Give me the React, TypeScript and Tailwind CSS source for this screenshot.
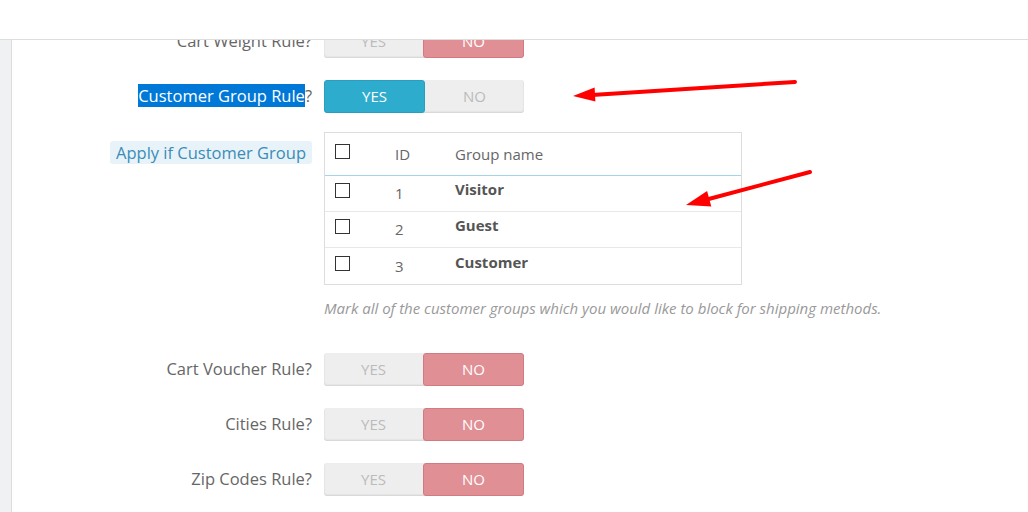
import React from "react";

const font = { fontFamily: '"Open Sans", "Noto Sans", sans-serif' };

type ToggleProps = { on: boolean };

const Toggle = ({ on }: ToggleProps) => {
  return (
    <div className="flex h-[33px] w-[200px] shrink-0 rounded-[3px] bg-[#eeeeee] text-[15px] shadow-[inset_0_-1px_2px_rgba(0,0,0,0.12)]">
      {on ? (
        <span className="flex flex-1 items-center justify-center rounded-[3px] border border-[#299fc0] bg-[#2eacce] text-white">
          YES
        </span>
      ) : (
        <span className="flex flex-1 items-center justify-center text-[#bbbbbb]">YES</span>
      )}
      {on ? (
        <span className="flex flex-1 items-center justify-center text-[#bbbbbb]">NO</span>
      ) : (
        <span className="flex flex-1 items-center justify-center rounded-[3px] border border-[#d27a82] bg-[#e08f95] text-white">
          NO
        </span>
      )}
    </div>
  );
};

const Checkbox = () => (
  <span className="mb-[6px] block h-[15px] w-[15px] border border-[#333333] bg-white"></span>
);

const groups = [
  { id: 1, name: "Visitor" },
  { id: 2, name: "Guest" },
  { id: 3, name: "Customer" },
];

const RuleRow = ({ label, on }: { label: React.ReactNode; on: boolean }) => (
  <div className="flex items-center">
    <div className="w-[312px] shrink-0 pr-3 text-right text-[16.5px] text-[#666666]">{label}</div>
    <Toggle on={on} />
  </div>
);

export default function App() {
  return (
    <div className="relative h-[512px] w-[1028px] overflow-hidden bg-white" style={font}>
      <header className="h-[40px] border-b border-[#dddddd] bg-white"></header>
      <div className="flex h-[472px]">
        <aside className="w-[12px] shrink-0 border-r border-[#dcdcdc] bg-[#eff1f3]"></aside>
        <main className="-ml-[12px] flex-1 overflow-hidden">
          <div className="-mt-[15px] flex flex-col">
            <div className="pl-[12px]">
              <RuleRow label="Cart Weight Rule?" on={false} />
            </div>
            <div className="mt-[22px] pl-[12px]">
              <RuleRow
                on={true}
                label={
                  <>
                    <span className="bg-[#0078d7] text-white">Customer Group Rule</span>?
                  </>
                }
              />
            </div>

            <div className="mt-[19px] flex items-start pl-[12px]">
              <div className="flex w-[312px] shrink-0 justify-end pr-3 pt-[9px]">
                <span className="rounded-[3px] bg-[#e8f3f9] px-[6px] text-[16.5px] leading-[23px] text-[#3a8cb7]">
                  Apply if Customer Group
                </span>
              </div>
              <div className="flex flex-col">
                <div className="w-[418px] border border-[#dddddd] text-[15px] text-[#666666]">
                  <div className="grid h-[43px] grid-cols-[60px_60px_1fr] items-center border-b border-[#a6d3ec] pl-[10px]">
                    <Checkbox />
                    <span>ID</span>
                    <span>Group name</span>
                  </div>
                  {groups.map((g, i) => (
                    <div
                      key={g.id}
                      className={
                        i < groups.length - 1
                          ? "grid h-[36px] grid-cols-[60px_60px_1fr] items-center border-b border-[#e8e8e8] pl-[10px]"
                          : "grid h-[36px] grid-cols-[60px_60px_1fr] items-center pl-[10px]"
                      }
                    >
                      <Checkbox />
                      <span>{g.id}</span>
                      <span className="pb-[8px] font-bold text-[#555555]">{g.name}</span>
                    </div>
                  ))}
                </div>
                <p className="mt-[12px] whitespace-nowrap text-[15px] italic text-[#999999]">
                  Mark all of the customer groups which you would like to block for shipping methods.
                </p>
              </div>
            </div>

            <div className="mt-[33px] pl-[12px]">
              <RuleRow label="Cart Voucher Rule?" on={false} />
            </div>
            <div className="mt-[22px] pl-[12px]">
              <RuleRow label="Cities Rule?" on={false} />
            </div>
            <div className="mt-[22px] pl-[12px]">
              <RuleRow label="Zip Codes Rule?" on={false} />
            </div>
          </div>
        </main>
      </div>

      <svg className="pointer-events-none absolute left-0 top-0" width="1028" height="512">
        <line x1="795" y1="82" x2="592" y2="95" stroke="#ff0000" strokeWidth="4" strokeLinecap="round" />
        <polygon points="573,96 595.4,101.6 594.6,87.6" fill="#ff0000" />
        <line x1="810" y1="172" x2="705" y2="200" stroke="#ff0000" strokeWidth="4" strokeLinecap="round" />
        <polygon points="686,205 711.3,206.5 707.1,191.1" fill="#ff0000" />
      </svg>
    </div>
  );
}
